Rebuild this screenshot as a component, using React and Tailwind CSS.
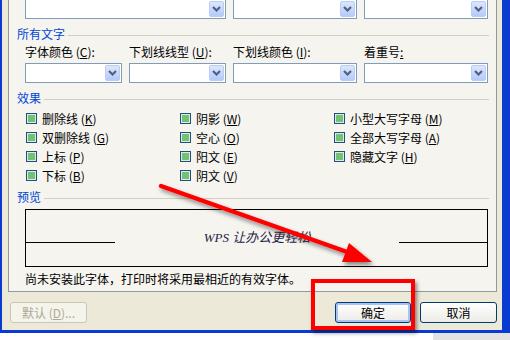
import React from 'react';

const font = "font-['Noto_Sans_CJK_SC','Noto_Sans_CJK_JP',sans-serif]";

function Key({ k }) {
  return (
    <span>
      (<span className="underline underline-offset-1">{k}</span>)
    </span>
  );
}

function Combo({ w }) {
  return (
    <div className={`${w} h-[20px] shrink-0 border border-[#7F9DB9] bg-white flex justify-end p-[1px]`}>
      <div className="w-[15px] h-full rounded-[2px] border border-[#BACCF4] bg-gradient-to-b from-[#DCE6FD] to-[#B6CAF7] flex items-center justify-center">
        <svg width="9" height="6" viewBox="0 0 9 6">
          <path d="M1 1 L4.5 4.5 L8 1" fill="none" stroke="#4D6185" strokeWidth="2.2" />
        </svg>
      </div>
    </div>
  );
}

function Group({ title }) {
  return (
    <div className="flex items-center h-[14px] pl-[8px]">
      <span className="text-[#0046D5]">{title}</span>
      <div className="flex-1 h-px bg-[#D0D0BF] ml-[3px] mr-[7px] mt-[2px]" />
    </div>
  );
}

function Check({ label, k }) {
  return (
    <div className="flex items-center h-[19px] gap-[5px]">
      <div className="w-[11px] h-[11px] border border-[#1C5180] bg-[#E3E8DF] p-[1px]">
        <div className="w-full h-full bg-[#72C275]" />
      </div>
      <span>
        {label} <Key k={k} />
      </span>
    </div>
  );
}

function Button({ children, primary }) {
  return (
    <div
      className={`h-[21px] rounded-[3px] border border-[#003C74] bg-gradient-to-b from-white to-[#ECEBE6] flex items-center justify-center ${
        primary ? 'w-[76px] shadow-[inset_0_0_0_2px_#A9C3F4]' : 'w-[77px]'
      }`}
    >
      {children}
    </div>
  );
}

export default function App() {
  return (
    <div className={`w-[510px] h-[340px] bg-white overflow-hidden relative text-black text-[12px] leading-[14px] ${font}`}>
      <div className="h-[333px] bg-[#ECE9D8] border-l-2 border-r-8 border-b-[3px] border-[#0A3BD0] flex flex-col">
        <div className="ml-[6px] mr-[5px] h-[292px] shrink-0 border border-t-0 border-[#919B9C] bg-[#F5F4EF] flex flex-col">
          <div className="flex gap-[7px] pl-[16px] -mt-[1px]">
            <Combo w="w-[201px]" />
            <Combo w="w-[124px]" />
            <Combo w="w-[124px]" />
          </div>

          <div className="mt-[8px]">
            <Group title="所有文字" />
          </div>
          <div className="flex gap-[7px] pl-[16px] mt-[4px] h-[14px]">
            <span className="w-[97px] shrink-0">
              字体颜色 <Key k="C" />:
            </span>
            <span className="w-[97px] shrink-0">
              下划线线型 <Key k="U" />:
            </span>
            <span className="w-[124px] shrink-0">
              下划线颜色 <Key k="I" />:
            </span>
            <span className="w-[124px] shrink-0">
              着重号<span className="underline underline-offset-1">:</span>
            </span>
          </div>
          <div className="flex gap-[7px] pl-[16px] mt-[4px]">
            <Combo w="w-[97px]" />
            <Combo w="w-[97px]" />
            <Combo w="w-[124px]" />
            <Combo w="w-[124px]" />
          </div>

          <div className="mt-[8px]">
            <Group title="效果" />
          </div>
          <div className="flex pl-[17px] mt-[4px]">
            <div className="w-[154px] flex flex-col">
              <Check label="删除线" k="K" />
              <Check label="双删除线" k="G" />
              <Check label="上标" k="P" />
              <Check label="下标" k="B" />
            </div>
            <div className="w-[154px] flex flex-col">
              <Check label="阴影" k="W" />
              <Check label="空心" k="O" />
              <Check label="阳文" k="E" />
              <Check label="阴文" k="V" />
            </div>
            <div className="w-[154px] flex flex-col">
              <Check label="小型大写字母" k="M" />
              <Check label="全部大写字母" k="A" />
              <Check label="隐藏文字" k="H" />
            </div>
          </div>

          <div className="mt-[5px]">
            <Group title="预览" />
          </div>
          <div className="ml-[16px] mt-[5px] w-[463px] h-[58px] border border-black flex items-end pb-[23px]">
            <div className="w-[89px] h-px bg-black" />
            <div className="flex-1 flex justify-center">
              <span className="italic text-[#1E2244] text-[13px] leading-[13px] -mb-[1px] font-['Liberation_Serif','Noto_Sans_CJK_SC',serif]">
                WPS 让办公更轻松
              </span>
            </div>
            <div className="w-[88px] h-px bg-black" />
          </div>
          <div className="ml-[16px] mt-[5px]">尚未安装此字体，打印时将采用最相近的有效字体。</div>
        </div>

        <div className="flex justify-between mt-[10px] ml-[8px] mr-[5px]">
          <div className="w-[77px] h-[21px] rounded-[3px] border border-[#C9C7BA] bg-[#F5F4EA] text-[#ACA899] flex items-center justify-center">
            默认&nbsp;<Key k="D" />...
          </div>
          <div className="flex gap-[9px]">
            <Button primary>确定</Button>
            <Button>取消</Button>
          </div>
        </div>
      </div>
      <div className="flex h-[7px]">
        <div className="w-[433px] bg-white" />
        <div className="flex-1 bg-[#E2E2E2]" />
      </div>

      <div className="absolute left-[311px] top-[279px] w-[104px] h-[51px] border-4 border-[#FF0000] shadow-[2px_3px_4px_rgba(0,0,0,0.45)]" />
      <svg className="absolute left-0 top-0 pointer-events-none" width="510" height="340">
        <defs>
          <filter id="sh" x="-10%" y="-10%" width="130%" height="140%">
            <feDropShadow dx="2" dy="3" stdDeviation="2" floodColor="#000" floodOpacity="0.45" />
          </filter>
        </defs>
        <g filter="url(#sh)">
          <line x1="161" y1="186" x2="350" y2="253" stroke="#FF0000" strokeWidth="4.5" strokeLinecap="round" />
          <polygon points="372,262 342,262 349,243" fill="#FF0000" />
        </g>
      </svg>
    </div>
  );
}
